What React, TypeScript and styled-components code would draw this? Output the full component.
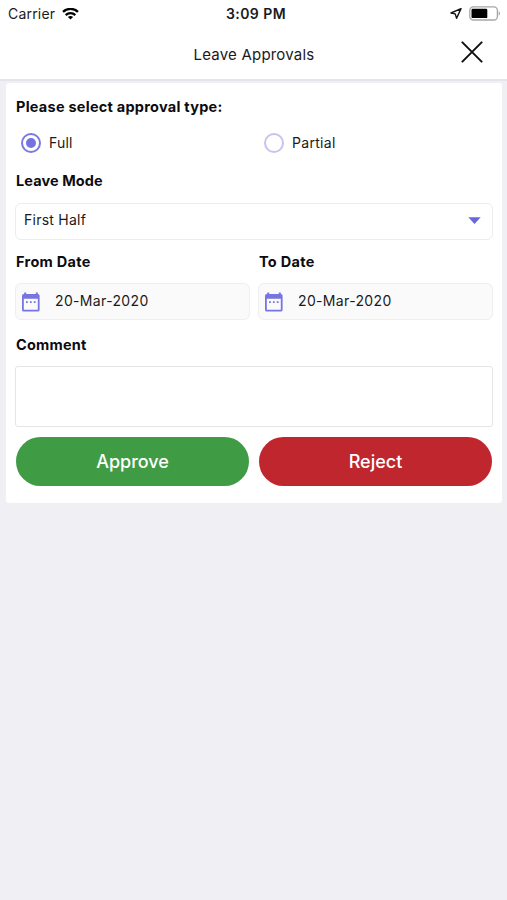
import React from 'react';
import styled, { createGlobalStyle } from 'styled-components';

const GlobalStyle = createGlobalStyle`
  * { box-sizing: border-box; }
  body {
    margin: 0;
    background: #efeff4;
    font-family: Inter, 'Liberation Sans', sans-serif;
    color: #1a1a1c;
  }
`;

const Screen = styled.div`
  width: 507px;
  height: 900px;
  overflow: hidden;
  background: #efeff4;
`;

const StatusBar = styled.header`
  display: grid;
  grid-template-columns: 1fr auto 1fr;
  align-items: center;
  height: 28px;
  padding: 0 6px 0 8px;
  background: #fff;
`;

const StatusSide = styled.div<{ $end?: boolean }>`
  display: flex;
  align-items: center;
  justify-content: ${(p) => (p.$end ? 'flex-end' : 'flex-start')};
  gap: 7px;
  padding-bottom: ${(p) => (p.$end ? 2 : 0)}px;
`;

const Text = styled.span<{ $size?: number; $weight?: number; $spacing?: number }>`
  font-size: ${(p) => p.$size ?? 14}px;
  font-weight: ${(p) => p.$weight ?? 400};
  letter-spacing: ${(p) => p.$spacing ?? 0}px;
  line-height: 20px;
  white-space: nowrap;
`;

const Clock = styled(Text)`
  padding-left: 3px;
`;

const NavBar = styled.div`
  display: grid;
  grid-template-columns: 1fr auto 1fr;
  align-items: center;
  height: 53px;
  padding: 0 24px 0 25px;
  background: #fff;
  border-bottom: 2px solid #e4e4ea;
`;

const CloseButton = styled.button`
  grid-column: 3;
  justify-self: end;
  display: flex;
  margin-top: -4px;
  padding: 0;
  border: 0;
  background: none;
`;

const NavTitle = styled(Text)`
  grid-column: 2;
  padding-top: 2px;
`;

const Card = styled.main`
  height: 420px;
  margin: 2px 5px 0 6px;
  padding: 0 9px;
  background: #fff;
  border-radius: 3px;
`;

const Columns = styled.div`
  display: grid;
  grid-template-columns: 1fr 1fr;
  column-gap: 8px;
`;

const ActionRow = styled(Columns)`
  column-gap: 10px;
  padding: 0 1px;
`;

const Label = styled.div<{ $height: number; $spacing?: number; $drop?: number }>`
  display: flex;
  align-items: center;
  height: ${(p) => p.$height}px;
  padding: ${(p) => p.$drop ?? 0}px 0 0 1px;
  font-size: 14.5px;
  font-weight: 700;
  letter-spacing: ${(p) => p.$spacing ?? 0.22}px;
  color: #0c0c0e;
`;

const Option = styled.label`
  display: flex;
  align-items: center;
  gap: 8px;
  height: 28px;
  padding-left: 6px;
`;

const Radio = styled.span<{ $checked?: boolean }>`
  display: grid;
  place-items: center;
  width: 20px;
  height: 20px;
  border: 2px solid ${(p) => (p.$checked ? '#7b7ae0' : '#c8c2f1')};
  border-radius: 50%;

  &::after {
    content: '';
    width: 10px;
    height: 10px;
    border-radius: 50%;
    background: ${(p) => (p.$checked ? '#7574df' : 'transparent')};
  }
`;

const Select = styled.div`
  display: flex;
  align-items: center;
  justify-content: space-between;
  height: 37px;
  padding: 0 11px 3px 8px;
  border: 1px solid #ececee;
  border-radius: 6px;
`;

const DateField = styled.div`
  display: flex;
  align-items: center;
  gap: 14px;
  height: 37px;
  padding: 0 5px 1px;
  background: #fafafb;
  border: 1px solid #efeff1;
  border-radius: 6px;
`;

const CommentBox = styled.div`
  height: 61px;
  margin-bottom: 10px;
  border: 1px solid #e4e5e7;
  border-radius: 3px;
`;

const ActionButton = styled.button<{ $color: string }>`
  height: 49px;
  padding: 0;
  border: 0;
  border-radius: 25px;
  background: ${(p) => p.$color};
  color: #fff;
  font-family: inherit;
`;

const WifiIcon = () => (
  <svg width="17" height="13" viewBox="0 0 17 13" fill="none" stroke="#000" strokeWidth="2.3">
    <path d="M1 3.9C5.1 -0.1 11.9 -0.1 16 3.9" />
    <path d="M3.7 7.1C6.4 4.5 10.6 4.5 13.3 7.1" />
    <path d="M5.9 9C7.4 7.6 9.6 7.6 11.1 9L8.5 11.6Z" fill="#000" stroke="none" />
  </svg>
);

const LocationIcon = () => (
  <svg width="12" height="12" viewBox="0 0 12 12" fill="none" stroke="#111" strokeWidth="1.4" strokeLinejoin="round">
    <path d="M11 1.6L1 6L5.2 6.9L6.6 11.2Z" />
  </svg>
);

const BatteryIcon = () => (
  <svg width="32" height="15" viewBox="0 0 32 15">
    <rect x="0.8" y="0.8" width="27.6" height="13.2" rx="3.6" fill="#fff" stroke="#a6a6a6" strokeWidth="1.3" />
    <rect x="2.5" y="2.7" width="15.8" height="9.4" rx="1.2" fill="#000" />
    <path d="M29.6 5.2C31.4 5.7 31.4 9.1 29.6 9.6Z" fill="#a6a6a6" />
  </svg>
);

const CloseIcon = () => (
  <svg width="22" height="22" viewBox="0 0 22 22" stroke="#111" strokeWidth="2" strokeLinecap="round">
    <path d="M1.4 1.4L20.6 20.6M20.6 1.4L1.4 20.6" />
  </svg>
);

const CaretIcon = () => (
  <svg width="13" height="8" viewBox="0 0 13 8">
    <path d="M0.3 1.3H12.7L6.5 7.9Z" fill="#6867df" />
  </svg>
);

const CalendarShape = styled.svg`
  flex: none;
  margin-top: 2px;
`;

const CalendarIcon = () => (
  <CalendarShape width="20" height="20" viewBox="0 0 20 20">
    <path
      fill="#7775e0"
      fillRule="evenodd"
      d="M3.2 0.5H5.2V2H14.8V0.5H16.8V2H17Q18.6 2 18.6 3.8V17.7Q18.6 19.6 16.8 19.6H2.8Q1 19.6 1 17.7V3.8Q1 2 2.8 2H3.2ZM2.8 6.8V17.8H16.8V6.8Z"
    />
    <path fill="#7775e0" d="M5 9.2H6.8V11H5ZM8.9 9.2H10.7V11H8.9ZM12.8 9.2H14.6V11H12.8Z" />
  </CalendarShape>
);

export default function App() {
  return (
    <Screen>
      <GlobalStyle />
      <StatusBar>
        <StatusSide>
          <Text $spacing={0.2}>Carrier</Text>
          <WifiIcon />
        </StatusSide>
        <Clock $weight={600} $spacing={0.45}>3:09 PM</Clock>
        <StatusSide $end>
          <LocationIcon />
          <BatteryIcon />
        </StatusSide>
      </StatusBar>
      <NavBar>
        <NavTitle $size={15} $spacing={0.2}>Leave Approvals</NavTitle>
        <CloseButton aria-label="Close">
          <CloseIcon />
        </CloseButton>
      </NavBar>
      <Card>
        <Label $height={46} $spacing={0.25}>Please select approval type:</Label>
        <Columns>
          <Option>
            <Radio $checked />
            <Text $spacing={0.2}>Full</Text>
          </Option>
          <Option>
            <Radio />
            <Text $spacing={0.3}>Partial</Text>
          </Option>
        </Columns>
        <Label $height={46} $spacing={0.1}>Leave Mode</Label>
        <Select>
          <Text $spacing={0.25}>First Half</Text>
          <CaretIcon />
        </Select>
        <Columns>
          <Label $height={43} $spacing={0.3}>From Date</Label>
          <Label $height={43} $spacing={0.3}>To Date</Label>
          <DateField>
            <CalendarIcon />
            <Text $spacing={0.35}>20-Mar-2020</Text>
          </DateField>
          <DateField>
            <CalendarIcon />
            <Text $spacing={0.35}>20-Mar-2020</Text>
          </DateField>
        </Columns>
        <Label $height={46} $drop={2}>Comment</Label>
        <CommentBox />
        <ActionRow>
          <ActionButton $color="#409b45">
            <Text $size={18} $weight={500}>Approve</Text>
          </ActionButton>
          <ActionButton $color="#c0262d">
            <Text $size={18} $weight={500}>Reject</Text>
          </ActionButton>
        </ActionRow>
      </Card>
    </Screen>
  );
}
